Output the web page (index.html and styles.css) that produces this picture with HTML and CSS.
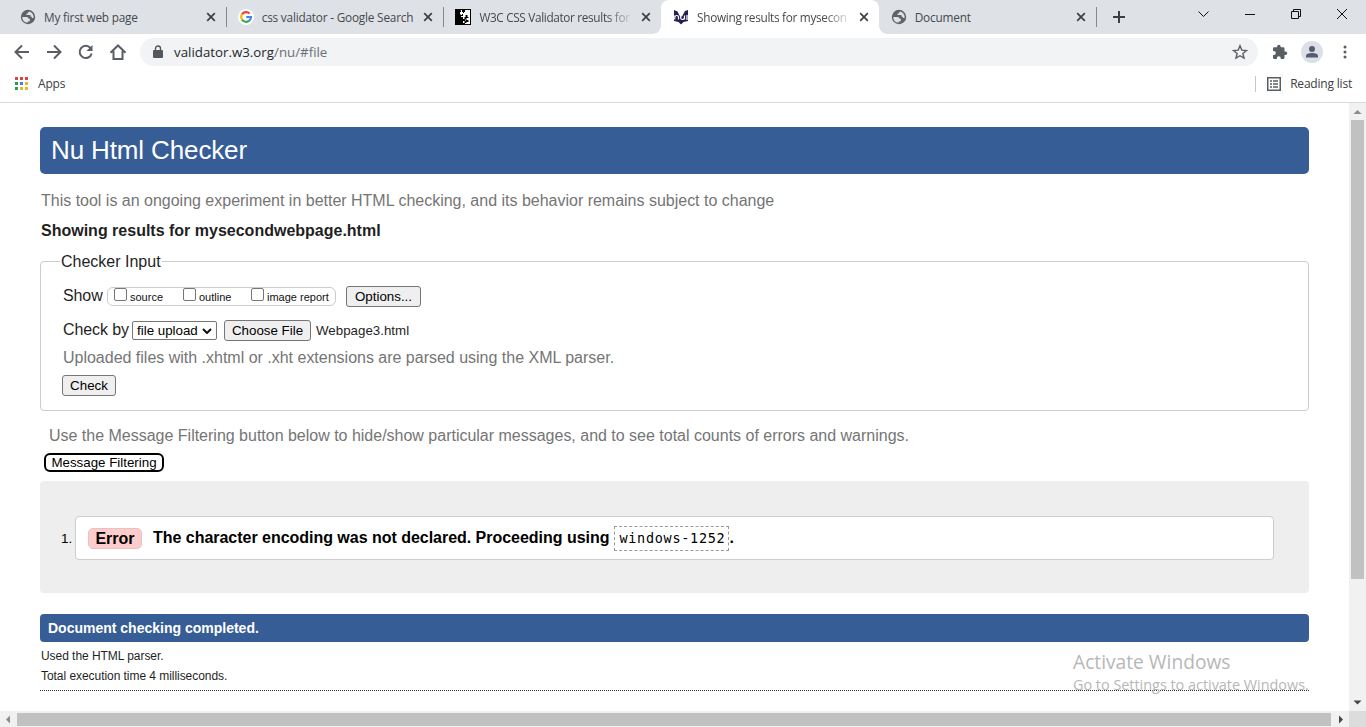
FILE: index.html
```html
<!DOCTYPE html>
<html lang="en">
<head>
<meta charset="utf-8">
<title>Showing results for mysecondwebpage.html</title>
<link rel="stylesheet" href="styles.css">
</head>
<body>
<svg class="defs" width="0" height="0">
  <symbol id="globe" viewBox="0 0 16 16"><circle cx="8" cy="8" r="7.2" fill="#5f6368"/><path d="M2.300 8h4.200c1.500 0 2 .8 2 1.800h1.400v1.500c0 .7-.6 1.300-1.300 1.300h-.8v1C4.600 13.700 2.200 11.200 2.300 8zM9.500 2.500c-.5.400-1 .6-1.500.8v1.200H6.500V6h4v1.500c1.400 0 1.500.8 1.500 1.500h1.700c.2-3-1.500-5.600-4.200-6.500z" fill="#dee1e6"/></symbol>
  <symbol id="close" viewBox="0 0 16 16"><path d="M4.200 4.200l7.600 7.600M11.800 4.200l-7.600 7.600" stroke="#3c4043" stroke-width="1.7"/></symbol>
</svg>
<div class="window">
  <div class="tabstrip">
    <div class="tab"><svg class="fav"><use href="#globe"/></svg><span class="title"><span>My first web page</span></span><svg class="close"><use href="#close"/></svg></div>
    <div class="tab"><svg class="fav" viewBox="0 0 16 16"><circle cx="8" cy="8" r="8" fill="#fff"/><g fill="none" stroke-width="2.200"><path d="M4 5.300A4.900 4.900 0 0 1 11.600 4.500" stroke="#ea4335"/><path d="M4 10.600A4.900 4.900 0 0 1 4 5.300" stroke="#fbbc05"/><path d="M11.400 11.500A4.900 4.900 0 0 1 4 10.600" stroke="#34a853"/><path d="M8.200 8H13a4.900 4.900 0 0 1-1.600 3.600" stroke="#4285f4"/></g></svg><span class="title"><span>css validator - Google Search</span></span><svg class="close"><use href="#close"/></svg></div>
    <div class="tab last"><svg class="fav" viewBox="0 0 16 16"><path d="M0 0h16v16H0z"/><path d="M5.500 1H15v14h-5v-1H8v-2h2v-2H8V8H6V6l-1-1V3h1V2z" fill="#fff"/><path d="M7 1h3v2H9v1H8V3H7zM5 6h2V5h1v2H5zM9.500 8h1V6h2v2h1v1h-2v2h2v2h-2v1h-2v-2h1v-2h-1z"/></svg><span class="title fade"><span>W3C CSS Validator results for</span></span><svg class="close"><use href="#close"/></svg></div>
    <div class="tab active"><svg class="fav" viewBox="0 0 16 16"><path d="M1 1l3.500 1.500L7 7.500h2L12 2l3-1v11l-4.500 1L8 15.500 5.500 13 1 12z" fill="#25204f"/><path d="M1.800 10.500V6.500M1.800 8q.4-1.500 2-1.500t1.700 1.500v2.500M7.700 6.500v2.500q0 1.500 1.600 1.500T11.500 9M11.500 6.500v4M14 6v5" fill="none" stroke="#fff" stroke-width="1.200"/></svg><span class="title fade"><span>Showing results for mysecon</span></span><svg class="close"><use href="#close"/></svg></div>
    <div class="tab"><svg class="fav"><use href="#globe"/></svg><span class="title"><span>Document</span></span><svg class="close"><use href="#close"/></svg></div>
    <svg class="plus" viewBox="0 0 14 14"><path d="M7 1v12M1 7h12" stroke="#3c4043" stroke-width="2"/></svg>
    <svg class="controls" viewBox="0 0 154 28" fill="none" stroke="#111" stroke-width="1"><path d="M4.500 11.500l5 5 5-5M51 14.500h10M97.500 11.500h7v7h-7zM99.500 11.500v-2h7v7h-2M143 9l10 10M153 9l-10 10"/></svg>
  </div>
  <div class="toolbar">
    <svg class="nav" viewBox="0 0 132 28" fill="none" stroke="#5a5e63" stroke-width="2"><path d="M29 14H16M22 7.500L15.500 14l6.500 6.500M47 14h13M54 7.500l6.500 6.500-6.500 6.500"/><path d="M90.500 10a6.100 6.100 0 1 0 1.200 5.500"/><path d="M92.500 7v6h-6z" fill="#5a5e63" stroke="none"/><path d="M110.500 14.800L118 7.500l7.500 7.300M113.500 13v8h9v-8"/></svg>
    <div class="omnibox"><svg class="lock" viewBox="0 0 10 14"><path d="M1 5h8q1 0 1 1v6q0 1-1 1H1q-1 0-1-1V6q0-1 1-1z" fill="#54575b"/><path d="M2.500 5V3.500a2.500 2.500 0 0 1 5 0V5" fill="none" stroke="#54575b" stroke-width="1.400"/></svg><span class="url">validator.w3.org<span>/nu/#file</span></span><svg class="star" viewBox="0 0 16 16"><path d="M8 1.800l1.800 4.300 4.700.4-3.600 3 1.100 4.600L8 11.700 4 14.100l1.100-4.600-3.600-3 4.700-.4z" fill="none" stroke="#5a5e63" stroke-width="1.400"/></svg></div>
    <svg class="ext" viewBox="0 0 16 16"><path d="M13.500 7.500h-1V4.500q0-1.200-1.200-1.200H8.700V2.500a1.800 1.800 0 0 0-3.600 0v.8H2.300Q1 3.300 1 4.500v2.600h.8a2 2 0 0 1 0 4H1v2.600Q1 15 2.300 15h2.600v-.9a1.900 1.900 0 0 1 3.800 0v.9h2.600q1.200 0 1.200-1.300V11h1a1.750 1.750 0 0 0 0-3.500z" fill="#5a5e63"/></svg>
    <svg class="avatar" viewBox="0 0 22 22"><circle cx="11" cy="11" r="11" fill="#dcdfe8"/><circle cx="11" cy="8" r="3" fill="#555a72"/><path d="M5 16.500v-1.500c0-2.200 3.500-3 6-3s6 .8 6 3v1.500z" fill="#555a72"/></svg>
    <svg class="menu" viewBox="0 0 4 14" fill="#5a5e63"><circle cx="2" cy="2" r="1.500"/><circle cx="2" cy="7" r="1.500"/><circle cx="2" cy="12" r="1.500"/></svg>
  </div>
  <div class="bookmarks">
    <svg class="apps" viewBox="0 0 13 13"><path d="M0 0h3v3H0zM5 0h3v3H5zM10 0h3v3h-3z" fill="#d9453a"/><path d="M0 5h3v3H0zM0 10h3v3H0z" fill="#2f9a4f"/><path d="M5 5h3v3H5z" fill="#3b7ded"/><path d="M10 5h3v3h-3zM5 10h3v3H5zM10 10h3v3h-3z" fill="#eab52f"/></svg>
    <span class="apps-label">Apps</span>
    <div class="reading"><svg viewBox="0 0 14 14"><path d="M.75.75h12.500v12.500H.75z" fill="none" stroke="#5a5e63" stroke-width="1.500"/><path d="M3 4h2M6 4h5M3 7h2M6 7h5M3 10h2M6 10h5" stroke="#5a5e63" stroke-width="1.300"/></svg><span>Reading list</span></div>
  </div>
  <div class="viewport">
    <main>
      <h1><span>Nu Html Checker</span></h1>
      <p class="about"><span>This tool is an ongoing experiment in better HTML checking, and its behavior remains subject to change</span></p>
      <h2><span>Showing results for mysecondwebpage.html</span></h2>
      <fieldset class="input">
        <legend>Checker Input</legend>
        <div class="row show"><span class="label">Show</span><div class="checks"><label><i></i><span>source</span></label><label><i></i><span>outline</span></label><label><i></i><span>image report</span></label></div><button class="options">Options...</button></div>
        <div class="row by"><span class="label">Check by</span><div class="select"><span>file upload</span><svg viewBox="0 0 10 6"><path d="M1 1l4 4 4-4" fill="none" stroke="#111" stroke-width="2"/></svg></div><button class="choose">Choose File</button><span class="filename">Webpage3.html</span></div>
        <p class="hint"><span>Uploaded files with .xhtml or .xht extensions are parsed using the XML parser.</span></p>
        <button class="check">Check</button>
      </fieldset>
      <p class="filter-text"><span>Use the Message Filtering button below to hide/show particular messages, and to see total counts of errors and warnings.</span></p>
      <button class="filtering">Message Filtering</button>
      <section class="results"><span class="num">1.</span><div class="message"><strong class="error">Error</strong><strong class="desc">The character encoding was not declared. Proceeding using</strong><code>windows-1252</code><strong>.</strong></div></section>
      <div class="complete"><span>Document checking completed.</span></div>
      <p class="stat"><span>Used the HTML parser.</span></p>
      <p class="stat"><span>Total execution time 4 milliseconds.</span></p>
      <hr>
    </main>
    <div class="vscroll"><svg viewBox="0 0 17 17"><path d="M4.500 11l4-4 4 4z" fill="#8b8b8b"/></svg><div class="vthumb"></div><svg class="down" viewBox="0 0 17 17"><path d="M4.500 6.500l4 4 4-4z" fill="#444"/></svg></div>
  </div>
  <div class="hscroll"><svg viewBox="0 0 17 16"><path d="M10 4.500v8L6 8.500z" fill="#8b8b8b"/></svg><div class="hthumb"></div><svg viewBox="0 0 17 16"><path d="M8 4.500v8l4-4z" fill="#444"/></svg><div class="corner"></div></div>
  <div class="watermark"><div class="w1">Activate Windows</div><div class="w2">Go to Settings to activate Windows.</div></div>
</div>
</body>
</html>
```
FILE: styles.css
```css
* { box-sizing: border-box; }
body { margin: 0; font-family: "Liberation Sans", Arial, sans-serif; background: #fff; color: #1f1f1f; overflow: hidden; }
p, h1, h2 { margin: 0; }
svg { display: block; flex: none; }
.defs { position: absolute; }
.window { position: relative; width: 1366px; height: 727px; display: flex; flex-direction: column; white-space: nowrap; }
.tabstrip, .toolbar, .bookmarks { font-family: "Open Sans", "Noto Sans", sans-serif; font-size: 12px; display: flex; align-items: center; flex: none; }

.tabstrip { height: 34px; background: #dee1e6; padding-left: 8px; }
.tab { width: 217.700px; flex: none; height: 34px; display: flex; align-items: center; padding: 0 7px 0 12px; position: relative; color: #45494d; }
.tab::after { content: ""; position: absolute; right: -1px; top: 7px; width: 1px; height: 20px; background: #85888d; }
.tab.last::after, .tab.active::after { display: none; }
.tab.active { background: #fff; border-radius: 8px 8px 0 0; }
.tab.active::before { content: ""; position: absolute; left: -8px; right: -8px; bottom: 0; height: 8px; background: radial-gradient(circle at 0 0, #dee1e6 7.500px, #fff 8px) left / 8px 8px no-repeat, radial-gradient(circle at 100% 0, #dee1e6 7.500px, #fff 8px) right / 8px 8px no-repeat; }
.fav { width: 16px; height: 16px; margin-right: 8px; }
.title { flex: 1; overflow: hidden; margin-right: 4px; line-height: 18px; font-size: 11.800px; letter-spacing: -.2px; }
.tab.active .title { letter-spacing: -.3px; }
.tab.last .title { letter-spacing: -.34px; }
.fade { -webkit-mask-image: linear-gradient(90deg, #000 82%, transparent); mask-image: linear-gradient(90deg, #000 82%, transparent); }
.close { width: 16px; height: 16px; }
.plus { width: 14px; height: 14px; margin-left: 16px; }
.controls { width: 154px; height: 28px; margin-left: 68px; align-self: flex-start; }

.toolbar { height: 36px; }
.nav { width: 132px; height: 28px; margin-right: 8px; }
.omnibox { width: 1118px; height: 28px; border-radius: 14px; background: #f1f3f4; display: flex; align-items: center; padding: 0 10px 0 13px; }
.lock { width: 10px; height: 14px; margin-right: 11px; }
.url { font-size: 13.300px; color: #25282c; flex: 1; line-height: 18px; }
.url span { color: #6b6f74; }
.star { width: 16px; height: 16px; }
.ext { width: 16px; height: 16px; margin-left: 14px; }
.avatar { width: 22px; height: 22px; margin-left: 13px; }
.menu { width: 4px; height: 14px; margin-left: 20px; }

.bookmarks { height: 33px; border-bottom: 1px solid #d7d9dc; padding: 0 14px 5px 15px; color: #3c4043; }
.apps { width: 13px; height: 13px; margin-right: 10px; }
.apps-label, .reading span { letter-spacing: -.2px; }
.reading { margin-left: auto; height: 16px; border-left: 1px solid #c4c7cb; padding-left: 11px; display: flex; align-items: center; gap: 9px; }
.reading svg { width: 14px; height: 14px; }

.viewport { height: 608px; flex: none; display: flex; }
main { width: 1349px; padding: 24px 40px 0; }
h1 { height: 47px; background: #365d95; color: #fff; border-radius: 5px; padding-left: 11px; font-size: 26px; letter-spacing: -.13px; font-weight: 400; line-height: 46px; }
.about, .hint, .filter-text { line-height: 20px; font-size: 16px; letter-spacing: -.008px; color: #757575; }
.about { margin-top: 17px; padding-left: 1px; }
h2 { margin-top: 10px; padding-left: 1px; font-size: 16px; line-height: 20px; }
h1, .input, .results, .complete, hr { width: 1269px; }
.input { margin: 10px 0 0; height: 160px; border: 1px solid #ccc; border-radius: 4px; padding: 0 0 0 19px; }
legend { padding: 1px 1px 0; height: 20px; line-height: 20px; font-size: 16px; }
.row { display: flex; align-items: center; height: 21px; padding-left: 3px; }
.show { margin-top: 15px; }
.by { margin-top: 13px; }
.label { font-size: 16px; letter-spacing: -.1px; line-height: 18px; margin-bottom: 2px; }
.show .label { width: 44px; }
.by .label { width: 69px; }
.checks { width: 229px; height: 19px; border: 1px solid #ccc; border-radius: 6px; display: flex; padding-left: 6px; font-size: 11px; color: #111; }
.checks label { display: flex; width: 69px; }
.checks label:nth-child(2) { width: 68px; }
.checks i { width: 13px; height: 13px; border: 1px solid #767676; border-radius: 2px; margin-right: 3px; flex: none; }
.checks span { line-height: 19px; }
button { font-family: inherit; font-size: 13.333px; color: #000; padding: 0; border: 1px solid #767676; border-radius: 3px; background: #efefef; height: 21px; line-height: 19px; display: block; flex: none; }
.options { width: 75px; margin-left: 10px; }
.select { width: 85px; height: 19px; border: 1px solid #767676; border-radius: 2px; display: flex; align-items: center; justify-content: space-between; padding: 0 4px; font-size: 13.333px; color: #000; }
.select svg { width: 10px; height: 6px; }
.choose { width: 87px; margin: 0 5px 0 7px; }
.filename { font-size: 13.333px; }
.hint { margin-top: 7px; padding-left: 3px; }
.check { width: 54px; margin: 7px 0 0 2px; }
.filter-text { margin-top: 15px; padding-left: 9px; }
.filtering { margin: 7px 0 0 4px; width: 120px; height: 19px; border: 2px solid #000; border-radius: 6px; background: #fff; line-height: 15px; }
.results { margin-top: 9px; height: 112px; background: #eee; border-radius: 4px; display: flex; align-items: center; padding-top: 2px; color: #000; }
.num { width: 35px; padding-left: 21px; font-size: 13.333px; }
.message { width: 1199px; height: 44px; border: 1px solid #ccc; border-radius: 4px; background: #fff; display: flex; align-items: center; padding-left: 12px; font-size: 16px; }
.error { width: 54px; height: 21px; background: #fcc; border: 1px solid #e8c0c0; border-radius: 5px; text-align: center; line-height: 19px; margin-right: 11px; }
.desc { letter-spacing: -.025px; }
code { font-family: "DejaVu Sans Mono", monospace; font-size: 13.500px; letter-spacing: .7px; width: 115px; height: 25px; line-height: 23px; border: 1px dashed #999; padding-left: 4px; margin-left: 5px; }
.complete { margin-top: 21px; height: 28px; background: #365d95; color: #fff; border-radius: 4px; font-weight: bold; font-size: 14px; line-height: 28px; padding-left: 8px; }
.stat { font-size: 12px; letter-spacing: -.05px; line-height: 20px; padding-left: 1px; }
.complete + .stat { margin-top: 4px; }
hr { margin: 4px 0 0; border: 0; border-top: 1px dotted #333; }

.vscroll { width: 17px; background: #f1f1f1; display: flex; flex-direction: column; align-items: center; }
.vscroll svg { width: 17px; height: 17px; }
.vthumb { width: 13px; height: 459px; background: #c1c1c1; }
.vscroll .down { margin-top: auto; }
.hscroll { height: 16px; background: #f1f1f1; display: flex; align-items: center; }
.hscroll svg { width: 17px; height: 16px; }
.hthumb { width: 1314px; height: 13px; background: #c1c1c1; }
.corner { width: 17px; height: 16px; background: #dcdcdc; margin-left: auto; }
.watermark { position: absolute; left: 1073px; top: 648px; color: #b7b7b7; font-family: "Open Sans", "Noto Sans", sans-serif; }
.w1 { font-size: 19.200px; line-height: 28px; }
.w2 { font-size: 14.400px; line-height: 18px; }
```
